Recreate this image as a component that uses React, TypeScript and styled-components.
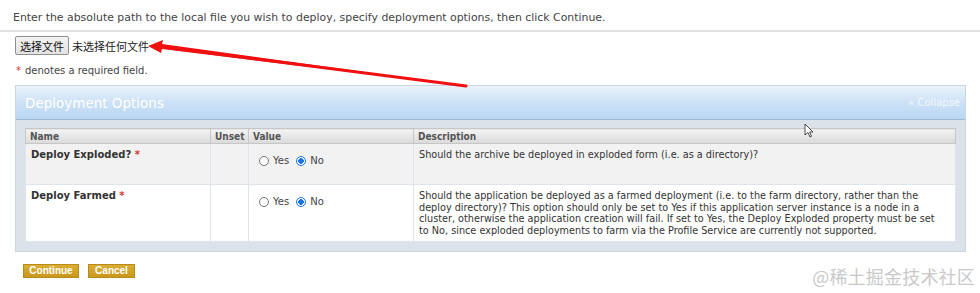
import React from "react";
import styled, { createGlobalStyle } from "styled-components";

const GlobalStyle = createGlobalStyle`
  html, body {
    margin: 0;
    padding: 0;
    background: #fff;
  }
  body {
    width: 980px;
    height: 293px;
    overflow: hidden;
    font-family: "DejaVu Sans", Verdana, sans-serif;
    color: #333;
  }
`;

const Page = styled.div`
  position: relative;
  width: 980px;
  height: 293px;
  box-sizing: border-box;
  padding-top: 11px;
`;

const Intro = styled.p`
  margin: 0 0 0 13px;
  font-size: 10.9px;
  line-height: 13px;
  color: #444;
`;

const Rule = styled.hr`
  margin: 6px 0 0 0;
  border: 0;
  border-top: 2px solid #e2e2e2;
`;

const FileRow = styled.div`
  display: flex;
  align-items: center;
  gap: 3px;
  margin: 4px 0 0 15px;
  height: 19px;
`;

const FileButton = styled.button`
  height: 19px;
  width: 54px;
  padding: 0;
  border: 1px solid #8f8f8f;
  border-radius: 2px;
  background: linear-gradient(#f4f4f4, #e2e2e2);
  font-family: "Noto Sans CJK SC", sans-serif;
  font-size: 11px;
  color: #111;
`;

const FileLabel = styled.span`
  font-family: "Noto Sans CJK SC", sans-serif;
  font-size: 11px;
  color: #222;
`;

const Note = styled.div`
  margin: 10px 0 0 16px;
  font-size: 10px;
  color: #444;
`;

const Star = styled.span`
  color: #d33;
  margin-right: 4px;
`;

const Panel = styled.section`
  margin: 9px 0 0 15px;
  width: 951px;
  background: #dce2ea;
  border: 1px solid #c9d6e4;
  box-sizing: border-box;
  padding-bottom: 9px;
`;

const PanelHeader = styled.div`
  height: 33px;
  display: flex;
  align-items: center;
  justify-content: space-between;
  padding: 0 5px 0 9px;
  background: linear-gradient(#eaf3fc 0%, #cfe3f7 45%, #b9d6f3 100%);
  border-bottom: 1px solid #9fb7cf;
`;

const PanelTitle = styled.h2`
  margin: 0;
  font-family: "DejaVu Sans", Verdana, sans-serif;
  font-weight: normal;
  font-size: 13.5px;
  color: #fff;
`;

const Collapse = styled.span`
  font-size: 10px;
  color: #f4f8fc;
`;

const TableWrap = styled.div`
  padding: 8px 9px 0 9px;
`;

const Table = styled.table`
  width: 100%;
  table-layout: fixed;
  border-collapse: collapse;
  background: #fff;
`;

const Th = styled.th<{ $w?: number }>`
  box-sizing: border-box;
  width: ${(p) => (p.$w ? `${p.$w}px` : "auto")};
  height: 15px;
  padding: 0 4px;
  text-align: left;
  font-family: "DejaVu Sans Condensed", "DejaVu Sans", sans-serif;
  font-size: 10px;
  font-weight: bold;
  color: #555;
  background: linear-gradient(#f3f3f3, #dadada);
  border: 1px solid #c6c6c6;
`;

const Row = styled.tr<{ $alt?: boolean; $h: number }>`
  height: ${(p) => p.$h}px;
  background: ${(p) => (p.$alt ? "#f2f2f2" : "#fff")};
`;

const Td = styled.td`
  vertical-align: top;
  padding: 5px 5px;
  border: 1px solid #dde4ec;
  font-size: 9.7px;
  line-height: 11.5px;
  color: #333;
`;

const NameCell = styled(Td)`
  font-weight: bold;
  font-size: 10px;
  color: #333;
`;

const ValueCell = styled(Td)`
  padding: 11px 0 0 10px;
`;

const DescCell = styled(Td)`
  white-space: nowrap;
`;

const DescLine = styled.span`
  display: block;
`;

const Radios = styled.div`
  display: flex;
  align-items: center;
  gap: 4px;
  font-size: 10px;
  color: #444;
`;

const Radio = styled.span<{ $on?: boolean }>`
  box-sizing: border-box;
  width: 10px;
  height: 10px;
  border-radius: 50%;
  border: 1px solid ${(p) => (p.$on ? "#1a73e8" : "#777")};
  background: ${(p) => (p.$on ? "radial-gradient(circle, #1a73e8 0 2.6px, #fff 3px)" : "#fff")};
  margin-left: ${(p) => (p.$on ? "3px" : "0")};
`;

const Actions = styled.div`
  display: flex;
  gap: 9px;
  margin: 12px 0 0 23px;
`;

const GoldButton = styled.button<{ $w: number }>`
  width: ${(p) => p.$w}px;
  height: 14px;
  padding: 0;
  border: 1px solid #b78b17;
  background: linear-gradient(#dcae32, #c9981d);
  color: #fff;
  font-family: "Liberation Sans", Arial, sans-serif;
  font-weight: bold;
  font-size: 10px;
  line-height: 12px;
`;

const Arrow = styled.svg`
  position: absolute;
  left: 0;
  top: 0;
  pointer-events: none;
`;

const Watermark = styled.div`
  position: absolute;
  right: 5px;
  bottom: 4px;
  font-family: "Noto Sans CJK SC", sans-serif;
  font-size: 18px;
  color: #c9c9c9;
  letter-spacing: 0.2px;
`;

const farmedLines = [
  "Should the application be deployed as a farmed deployment (i.e. to the farm directory, rather than the",
  "deploy directory)? This option should only be set to Yes if this application server instance is a node in a",
  "cluster, otherwise the application creation will fail. If set to Yes, the Deploy Exploded property must be set",
  "to No, since exploded deployments to farm via the Profile Service are currently not supported.",
];

const YesNo: React.FC = () => (
  <Radios>
    <Radio />
    <span>Yes</span>
    <Radio $on />
    <span>No</span>
  </Radios>
);

export default function App() {
  return (
    <>
      <GlobalStyle />
      <Page>
        <Intro>
          Enter the absolute path to the local file you wish to deploy, specify deployment options, then click Continue.
        </Intro>
        <Rule />
        <FileRow>
          <FileButton>选择文件</FileButton>
          <FileLabel>未选择任何文件</FileLabel>
        </FileRow>
        <Note>
          <Star>*</Star>denotes a required field.
        </Note>
        <Panel>
          <PanelHeader>
            <PanelTitle>Deployment Options</PanelTitle>
            <Collapse>« Collapse</Collapse>
          </PanelHeader>
          <TableWrap>
            <Table>
              <thead>
                <tr>
                  <Th $w={185}>Name</Th>
                  <Th $w={38}>Unset</Th>
                  <Th $w={165}>Value</Th>
                  <Th>Description</Th>
                </tr>
              </thead>
              <tbody>
                <Row $alt $h={41}>
                  <NameCell>
                    Deploy Exploded? <Star>*</Star>
                  </NameCell>
                  <Td />
                  <ValueCell>
                    <YesNo />
                  </ValueCell>
                  <DescCell>Should the archive be deployed in exploded form (i.e. as a directory)?</DescCell>
                </Row>
                <Row $h={56}>
                  <NameCell>
                    Deploy Farmed <Star>*</Star>
                  </NameCell>
                  <Td />
                  <ValueCell>
                    <YesNo />
                  </ValueCell>
                  <DescCell>
                    {farmedLines.map((line) => (
                      <DescLine key={line}>{line}</DescLine>
                    ))}
                  </DescCell>
                </Row>
              </tbody>
            </Table>
          </TableWrap>
        </Panel>
        <Actions>
          <GoldButton $w={56}>Continue</GoldButton>
          <GoldButton $w={47}>Cancel</GoldButton>
        </Actions>
        <Arrow width="980" height="293" viewBox="0 0 980 293">
          <path d="M466 86 L162 44 L163 40 L148 46 L161 53 L162 49 Z" fill="#f01010" />
          <path d="M466 86 L163 47" stroke="#f01010" strokeWidth="3" strokeLinecap="round" />
          <path
            d="M805 124 L805 135 L808 132.5 L810 137 L811.5 136.3 L809.7 132 L813 132 Z"
            fill="#fff"
            stroke="#222"
            strokeWidth="0.8"
          />
        </Arrow>
        <Watermark>@稀土掘金技术社区</Watermark>
      </Page>
    </>
  );
}
